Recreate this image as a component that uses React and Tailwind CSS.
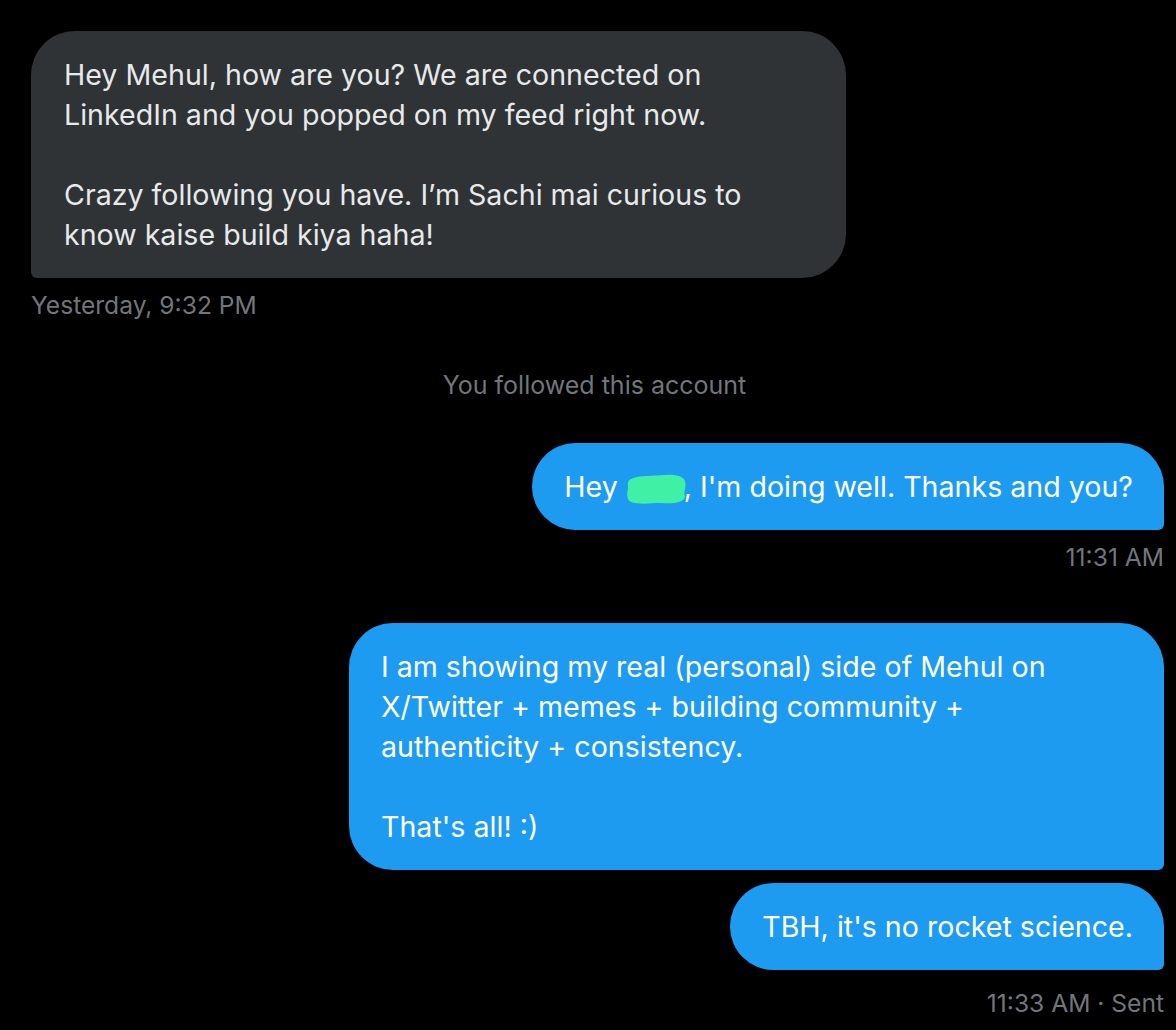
import React from "react";

const font = { fontFamily: 'Inter, "Noto Sans", sans-serif' };

export default function App() {
  return (
    <div className="w-[1176px] h-[1030px] bg-black overflow-hidden" style={font}>
      <div className="flex flex-col pt-[31px] pl-[31px] pr-[12px]">
        <div className="self-start w-[815px] bg-[#2f3336] text-[#e7e9ea] rounded-[44px] rounded-bl-[6px] pl-[33px] pr-[30px] pt-[24px] pb-[23px] text-[28.6px] leading-[40px]">
          Hey Mehul, how are you? We are connected on<br />
          LinkedIn and you popped on my feed right now.<br />
          <br />
          Crazy following you have. I’m Sachi mai curious to<br />
          know kaise build kiya haha!
        </div>
        <div className="mt-[13px] text-[24.6px] leading-[28px] text-[#71767b]">
          Yesterday, 9:32 PM
        </div>
        <div className="mt-[52px] text-center text-[25px] leading-[28px] text-[#71767b] pr-[6px]">
          You followed this account
        </div>
        <div className="mt-[44px] self-end bg-[#1d9bf0] text-white rounded-[44px] rounded-br-[6px] pl-[32px] pr-[31px] pt-[24px] pb-[23px] text-[28.6px] leading-[40px] whitespace-nowrap">
          Hey{" "}
          <span className="relative inline-block w-[58px] h-[30px] align-[-6px]">
            <svg viewBox="0 0 62 32" className="absolute left-[-2px] top-0 w-[64px] h-[32px]">
              <path
                d="M6 6 C14 2 28 3 40 2 C50 1 58 3 60 8 C62 14 58 18 60 24 C58 30 48 31 36 30 C26 30 14 32 6 29 C1 26 2 20 3 15 C3 10 2 8 6 6 Z"
                fill="#3ff0a5"
              />
            </svg>
          </span>
          , I'm doing well. Thanks and you?
        </div>
        <div className="mt-[13px] self-end text-[24.6px] leading-[28px] text-[#71767b]">
          11:31 AM
        </div>
        <div className="mt-[52px] self-end w-[815px] bg-[#1d9bf0] text-white rounded-[44px] rounded-br-[6px] pl-[32px] pr-[30px] pt-[24px] pb-[23px] text-[28.6px] leading-[40px]">
          I am showing my real (personal) side of Mehul on<br />
          X/Twitter + memes + building community +<br />
          authenticity + consistency.<br />
          <br />
          That's all! :)
        </div>
        <div className="mt-[13px] self-end bg-[#1d9bf0] text-white rounded-[44px] rounded-br-[6px] pl-[32px] pr-[31px] pt-[24px] pb-[23px] text-[28.6px] leading-[40px] whitespace-nowrap">
          TBH, it's no rocket science.
        </div>
        <div className="mt-[19px] self-end text-[24.6px] leading-[28px] text-[#71767b]">
          11:33 AM · Sent
        </div>
      </div>
    </div>
  );
}
